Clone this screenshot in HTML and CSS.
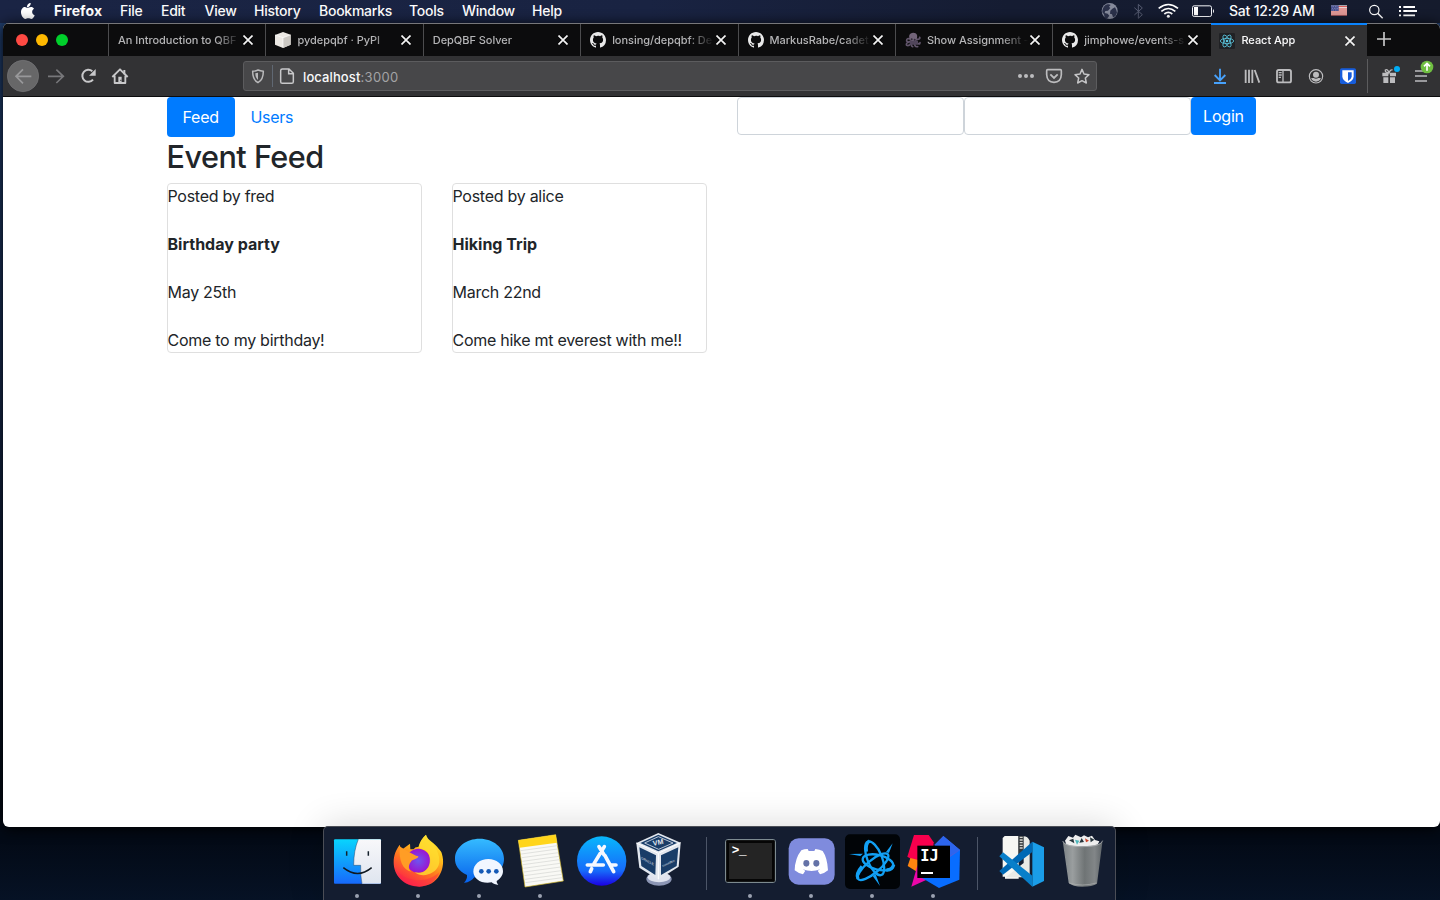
FILE: index.html
```html
<!DOCTYPE html>
<html lang="en">
<head>
<meta charset="utf-8">
<title>React App</title>
<link rel="stylesheet" href="styles.css">
</head>
<body>
<svg class="defs" width="0" height="0" aria-hidden="true">
  <defs>
    <symbol id="close" viewBox="0 0 30 30"><path d="M1 1 28 28M28 1 1 28" transform="translate(.5 .5)" stroke="#f4f4f4" stroke-width="5" fill="none"/></symbol>
    <symbol id="github" viewBox="0 0 16 16"><path fill="#e9e9e9" d="M8 0C3.58 0 0 3.58 0 8c0 3.54 2.29 6.53 5.47 7.59.4.07.55-.17.55-.38 0-.19-.01-.82-.01-1.49-2.01.37-2.53-.49-2.69-.94-.09-.23-.48-.94-.82-1.13-.28-.15-.68-.52-.01-.53.63-.01 1.08.58 1.23.82.72 1.21 1.87.87 2.33.66.07-.52.28-.87.51-1.07-1.78-.2-3.64-.89-3.64-3.95 0-.87.31-1.59.82-2.15-.08-.2-.36-1.02.08-2.12 0 0 .67-.21 2.2.82A7.6 7.6 0 0 1 8 3.87c.68 0 1.36.09 2 .26 1.53-1.04 2.2-.82 2.2-.82.44 1.1.16 1.92.08 2.12.51.56.82 1.27.82 2.15 0 3.07-1.87 3.75-3.65 3.95.29.25.54.73.54 1.48 0 1.07-.01 1.93-.01 2.2 0 .21.15.46.55.38A8.01 8.01 0 0 0 16 8c0-4.42-3.58-8-8-8z"/></symbol>
  </defs>
</svg>

<header class="menubar">
  <svg class="apple" viewBox="0 0 162 69"><path fill="#fff" d="M92 9c1 6-5 13-11 13-1-7 5-13 11-13zM82 24c3 0 6-3 11-3 4 0 7 2 9 5-8 5-7 16 2 20-2 6-6 11-10 11-3 0-5-2-9-2s-6 2-9 2c-6 0-13-11-13-20 0-10 6-16 12-16 3 0 5 3 7 3z"/></svg>
  <nav class="menus">
    <span class="app-name">Firefox</span><span>File</span><span>Edit</span><span>View</span><span>History</span><span>Bookmarks</span><span>Tools</span><span>Window</span><span>Help</span>
  </nav>
  <div class="status">
    <svg width="28" height="23" viewBox="768 0 84 69"><circle cx="809" cy="33" r="24" fill="#858a9b"/><path fill="#2b314a" d="M794 17c8-6 15-5 18-2l-5 5 4 4-7 8-8 1-2 6 9 2 5 6-6 8-2 4-6-6-2-10-5-6c0-8 2-14 7-20zM817 26l8-4 4 8 2 8-5 11-7 3-3-9-6-2 1-9z"/></svg>
    <svg width="28" height="23" viewBox="852 0 84 69"><path fill="none" stroke="#555b70" stroke-width="3" d="M883 23 907 44 895 55V13l12 11-24 21"/></svg>
    <svg width="32" height="23" viewBox="936 0 96 69"><g fill="none" stroke="#fff" stroke-width="5"><path d="M956 25q29-23 58 0M964 34q21-17 42 0M973 42q12-10 24 0"/></g><circle cx="985" cy="49" r="4.500" fill="#fff"/></svg>
    <svg width="36" height="23" viewBox="12 0 108 69"><rect x="37.500" y="17.500" width="57" height="32" rx="5" fill="none" stroke="#f5f6fa" stroke-width="3"/><path fill="#fff" d="M42 21h12v25H42zM99 27q6 6 0 13z"/></svg>
    <span class="clock">Sat 12:29 AM</span>
    <svg width="32" height="23" viewBox="429 0 96 69"><path fill="#eee" d="M453 16h48v30h-48z"/><path stroke="#d3423f" stroke-width="3" d="M453 20h48M453 27h48M453 33h48M453 39h48M453 45h48"/><path fill="#454d8d" d="M453 16h23v17h-23z"/><path stroke="#bfc4e0" stroke-width="2" stroke-dasharray="2 3" d="M455 20h20M457 25h18M455 30h20"/></svg>
    <svg class="search" width="32" height="23" viewBox="540 0 96 69"><circle cx="583" cy="30" r="14" fill="none" stroke="#fff" stroke-width="3.500"/><path stroke="#fff" stroke-width="4.500" d="m593 40 15 15"/></svg>
    <svg width="32" height="23" viewBox="636 0 96 69"><path stroke="#fff" stroke-width="5.500" d="M657 21h6M657 33h6M657 46h6M670 21h35M670 33h41M670 46h35" /></svg>
  </div>
</header>

<main class="window">
  <div class="tabs">
    <div class="lights"><i class="red"></i><i class="yellow"></i><i class="green"></i></div>
    <div class="tab"><span class="title">An Introduction to QBF</span><svg class="x"><use href="#close"/></svg></div>
    <div class="tab"><svg class="fav" viewBox="0 0 48 48"><path fill="#ece9e4" d="M24 0 47 8v30L24 48 0 38V9z"/><path fill="#cbc8c3" d="m24 17 23-9v30L24 48z"/><path fill="none" stroke="#fff" stroke-width="2" d="m1 9 23 8 22-8M24 17v29"/></svg><span class="title">pydepqbf · PyPI</span><svg class="x"><use href="#close"/></svg></div>
    <div class="tab"><span class="title">DepQBF Solver</span><svg class="x"><use href="#close"/></svg></div>
    <div class="tab"><svg class="fav"><use href="#github"/></svg><span class="title">lonsing/depqbf: De</span><svg class="x"><use href="#close"/></svg></div>
    <div class="tab"><svg class="fav"><use href="#github"/></svg><span class="title">MarkusRabe/cadet</span><svg class="x"><use href="#close"/></svg></div>
    <div class="tab"><svg class="fav" viewBox="0 0 48 48"><g fill="none" stroke="#61556b" stroke-width="5" stroke-linecap="round"><path d="M18 22Q4 16 5 27q4 6 10 1M17 28Q1 32 5 40q7 4 14-8M23 29q-8 12 0 15M29 29q-2 17 9 15M32 27q12 15 13 5M31 23q16 0 13-7"/></g><path fill="#726479" d="M13 10C15 0 33-1 36 9c2 9-2 17-8 22-9 2-18-13-15-21z"/><path fill="#51465b" d="M15 26h24v12H15z"/><circle cx="20" cy="22" r="3" fill="#302a38"/><circle cx="29" cy="23" r="3" fill="#302a38"/></svg><span class="title">Show Assignment -</span><svg class="x"><use href="#close"/></svg></div>
    <div class="tab"><svg class="fav"><use href="#github"/></svg><span class="title">jimphowe/events-s</span><svg class="x"><use href="#close"/></svg></div>
    <div class="tab active"><svg class="fav" viewBox="0 0 48 48"><rect width="48" height="48" rx="4" fill="#202124"/><g fill="none" stroke="#5bc6df" stroke-width="2.500"><ellipse cx="24" cy="24" rx="20" ry="8"/><ellipse cx="24" cy="24" rx="20" ry="8" transform="rotate(60 24 24)"/><ellipse cx="24" cy="24" rx="20" ry="8" transform="rotate(120 24 24)"/></g><circle cx="24" cy="24" r="4" fill="#5bc6df"/></svg><span class="title">React App</span><svg class="x"><use href="#close"/></svg></div>
    <svg class="newtab" viewBox="0 0 48 48"><path stroke="#c8c8c9" stroke-width="5" d="M3 24h42M24 3v42"/></svg>
  </div>

  <div class="toolbar">
    <svg class="tool back" viewBox="21 168 96 120"><circle cx="69" cy="228" r="47" fill="#676768" stroke="#77777a" stroke-width="2"/><path d="M94 229H48M69 208l-21 21 21 21" fill="none" stroke="#98989a" stroke-width="5"/></svg>
    <svg class="tool" viewBox="120 168 96 120"><path d="M144 229h46M169 209l21 20-21 20" fill="none" stroke="#77777a" stroke-width="5"/></svg>
    <svg class="tool" viewBox="216 168 96 120"><path d="M279 239a18 18 0 1 1-2-25" fill="none" stroke="#c8c8ca" stroke-width="6"/><path fill="#c8c8ca" d="M287 207v20h-20z"/></svg>
    <svg class="tool" viewBox="312 168 96 120"><path d="m337 231 23-23 23 23M344 227v22h32v-22" fill="none" stroke="#c8c8ca" stroke-width="5.500" stroke-linejoin="round"/><path fill="#c8c8ca" d="M355 230h10v20h-10zM370 210h6v13h-6z"/><path fill="#323234" d="M361 239h3v4h-3z"/></svg>
    <div class="urlbar">
      <svg class="uicon" viewBox="732 186 84 84"><path d="M774 210q7 3 16 4c0 17-4 28-16 34-12-6-16-17-16-34q9-1 16-4z" fill="none" stroke="#b9b9bb" stroke-width="4.500"/><path d="M774 218v22c-6-5-8-11-8-20z" fill="#b9b9bb"/></svg>
      <span class="divider"></span>
      <svg class="uicon" viewBox="819 186 84 84"><path d="M847 207h20l13 13v25q0 5-5 5h-28q-5 0-5-5v-33q0-5 5-5zM866 208v13h13" fill="none" stroke="#c8c8ca" stroke-width="4.500"/></svg>
      <span class="address"><b>localhost</b>:3000</span>
      <svg class="uicon" viewBox="516 186 84 84"><g fill="#bcbcbe"><circle cx="540" cy="228" r="6"/><circle cx="558" cy="228" r="6"/><circle cx="576" cy="228" r="6"/></g></svg>
      <svg class="uicon" viewBox="600 186 84 84"><path d="M623 209h38q3 0 3 3v12q-1 22-22 23-21-1-22-23v-12q0-3 3-3z" fill="none" stroke="#bcbcbe" stroke-width="5"/><path d="m631 223 11 11 11-11" fill="none" stroke="#bcbcbe" stroke-width="5.500"/></svg>
      <svg class="uicon" viewBox="684 186 84 84"><path d="m726 208 6 14 15 2-11 10 3 15-13-7-13 7 3-15-11-10 15-2z" fill="none" stroke="#c4c4c6" stroke-width="4.500" stroke-linejoin="round"/></svg>
    </div>
    <svg class="tool first-right" viewBox="72 168 96 120"><path d="M120 206v33M104 225l16 16 16-16M102 249h36" fill="none" stroke="#47a1fb" stroke-width="5.500"/></svg>
    <svg class="tool" viewBox="168 168 96 120"><path d="M197 209v40M207 209v40M217 209v40M224 210l14 38" fill="none" stroke="#bcbcbe" stroke-width="5.500"/></svg>
    <svg class="tool" viewBox="264 168 96 120"><rect x="291" y="210" width="42" height="37" rx="5" fill="none" stroke="#bcbcbe" stroke-width="5.500"/><path d="M309 210v37M296 218h9M296 225h9M296 232h7" stroke="#bcbcbe" stroke-width="4"/></svg>
    <svg class="tool" viewBox="360 168 96 120"><circle cx="408" cy="229" r="20" fill="none" stroke="#bcbcbe" stroke-width="3.500"/><circle cx="408" cy="224" r="9" fill="#bcbcbe"/><path d="M393 235q5-2 8-1 7 5 14 0 4-1 8 1-5 10-15 10t-15-10z" fill="#bcbcbe"/></svg>
    <svg class="tool" viewBox="456 168 96 120"><rect x="480" y="205" width="48" height="47" rx="5" fill="#175ddc"/><path fill="#fff" d="M487 211h34v18q0 12-17 20-17-8-17-20z"/><path fill="#175ddc" d="M504 217h11v13q-1 7-11 13z"/></svg>
    <span class="tool-sep"></span>
    <svg class="tool gift" viewBox="576 168 96 120"><g fill="#bcbcbe"><path d="M607 218h18v11h-18zM630 218h18v11h-18zM610 232h15v17h-15zM630 232h15v17h-15z"/></g><path d="M627 219q-13-1-11-9 7-4 11 9 4-12 11-9" stroke="#bcbcbe" stroke-width="4" fill="none"/><circle cx="651" cy="207" r="9" fill="#00adf5"/></svg>
    <svg class="tool" viewBox="675 168 96 120"><path d="M705 213h24M705 228h36M705 243h36" stroke="#bcbcbe" stroke-width="5"/><circle cx="741" cy="201" r="19" fill="#70bf41"/><path d="M741 212v-21M732 199l9-9 9 9" fill="none" stroke="#fff" stroke-width="5"/></svg>
  </div>

  <section class="page">
    <div class="container">
      <div class="row">
        <nav class="pills col"><a class="pill selected">Feed</a><a class="pill">Users</a></nav>
        <form class="login col"><input class="field" type="text" aria-label="Username"><input class="field" type="password" aria-label="Password"><button class="btn" type="button">Login</button></form>
      </div>
      <h2 class="heading">Event Feed</h2>
      <div class="cards">
        <article class="card"><p>Posted by fred</p><p class="name">Birthday party</p><p>May 25th</p><p>Come to my birthday!</p></article>
        <article class="card"><p>Posted by alice</p><p class="name">Hiking Trip</p><p>March 22nd</p><p>Come hike mt everest with me!!</p></article>
      </div>
    </div>
  </section>
</main>

<footer class="dock">
  <div class="app running"><svg viewBox="19.5 21 183 219"><defs><linearGradient id="fb" x1="0" y1="0" x2="0" y2="1"><stop offset="0" stop-color="#08d4fd"/><stop offset="1" stop-color="#1769fb"/></linearGradient><linearGradient id="fw" x1="0" y1="0" x2="0" y2="1"><stop offset="0" stop-color="#f8f8fa"/><stop offset="1" stop-color="#dfe5ef"/></linearGradient></defs><rect x="42" y="58" width="141" height="133" rx="3" fill="url(#fb)"/><path d="M115 58h65q3 0 3 3v127q0 3-3 3h-54q-5-22-4-55h-21q0-45 14-78z" fill="url(#fw)"/><path d="M115 58q-14 33-14 78h21q-1 33 4 55" fill="none" stroke="#25496f" stroke-width="1.500"/><path d="M80 94v13M145 94v13" stroke="#14212c" stroke-width="4.500"/><path d="M70 143q43 35 85 0" fill="none" stroke="#10181f" stroke-width="4.500"/></svg></div>
  <div class="app running"><svg viewBox="202.5 21 183 219"><defs><linearGradient id="ff" x1=".8" y1="0" x2=".25" y2="1"><stop offset="0" stop-color="#fff23a"/><stop offset=".3" stop-color="#ffc11b"/><stop offset=".6" stop-color="#ff7420"/><stop offset="1" stop-color="#fb174e"/></linearGradient><radialGradient id="fp"><stop offset="0" stop-color="#6d55ef"/><stop offset="1" stop-color="#9b14cf"/></radialGradient></defs><path d="M318 44c5 18 27 24 38 42 6 6 9 10 10 17 12 38-8 96-68 97-47-2-77-32-77-73 0-23 7-36 18-53l5 16 26-19 1 17 10 0q4-8 14-7 7-24 23-37z" fill="url(#ff)"/><circle cx="295" cy="122" r="36" fill="url(#fp)"/><path d="M318 44c-11 11-23 28-20 41 25 4 34 19 31 43-4 24-24 34-45 29 25 19 63 4 72-21 7-22-4-47-16-62-12-10-21-15-22-30z" fill="#ffdc31" opacity=".8"/><path d="M240 80c15 8 38 24 55 29 1 8-21 10-22 16-9 10-8 23 1 30-25-6-39-33-34-75z" fill="#ff9d25"/><path d="M225 143c24 43 92 52 133 14-10 27-33 43-61 43-41 0-65-25-72-57z" fill="#fb234b" opacity=".4"/></svg></div>
  <div class="app running"><svg viewBox="385.5 21 183 219"><defs><linearGradient id="mb" x1="0" y1="0" x2="0" y2="1"><stop offset="0" stop-color="#35bbff"/><stop offset="1" stop-color="#0761ec"/></linearGradient></defs><path d="M479 56c41 0 73 27 73 60 0 44-46 66-89 56-8 10-19 17-31 16 7-7 10-14 9-23-25-12-37-29-36-51 1-33 34-58 74-58z" fill="url(#mb)"/><path d="M505 117c24 0 44 16 44 36 0 12-7 23-19 30 0 5 2 8 5 12-8-1-16-4-20-8-31 6-54-11-55-32 0-22 20-38 45-38z" fill="#f1f6ff"/><g fill="#1459b6"><circle cx="484" cy="154" r="7"/><circle cx="506" cy="154" r="7"/><circle cx="529" cy="154" r="7"/></g></svg></div>
  <div class="app running"><svg viewBox="-1.5 21 183 219"><path d="m25 61 112-17 23 139-115 18z" fill="#f9f9f5" stroke="#cfb426" stroke-width="2"/><path d="m25 61 112-17 4 24-112 15z" fill="#ffd51b"/><path stroke="#d3d4d2" stroke-width="2" d="m32 92 110-15M34 102l109-15M36 113l109-15M37 124l110-15M39 134l110-15M40 145l110-15M42 156l110-15M43 167l111-15M45 178l110-15M46 188l111-15"/></svg></div>
  <div class="app"><svg viewBox="181.5 21 183 219"><defs><linearGradient id="as" x1="0" y1="0" x2="0" y2="1"><stop offset="0" stop-color="#08b7fc"/><stop offset=".7" stop-color="#176afa"/><stop offset="1" stop-color="#1b00e2"/></linearGradient></defs><circle cx="275" cy="123" r="74" fill="url(#as)"/><path d="m283 80-31 51M267 80l15 24M245 146l-4 9M232 135h48M304 135h14M285 107l26 48" fill="none" stroke="#f5f8ff" stroke-width="11" stroke-linecap="round"/></svg></div>
  <div class="app"><svg viewBox="364.5 21 183 219"><ellipse cx="447" cy="177" rx="38" ry="20" fill="#8c96b4"/><ellipse cx="447" cy="172" rx="34" ry="15" fill="#dfe3ee"/><path d="m379 69 66-30 67 29-6 72-61 39-57-36z" fill="#e2e7ee"/><path d="m391 69 54-25 56 25-56 25z" fill="#193d68"/><path d="m404 69 41-19 44 19-43 19z" fill="none" stroke="#d7deeb" stroke-width="2.500"/><path d="m388 82 50 24-2 59-42-27zM453 106l52-24-5 56-47 27z" fill="#193d68"/><path d="m379 69 66 31 67-32M445 100v78" fill="none" stroke="#fff" stroke-width="3"/><text class="vm-text" transform="translate(430 77) rotate(-10)" font-size="21">VM</text><text class="vm-text thin" transform="matrix(.9 .48 0 1 394 117)" font-size="10">ORACLE</text><text class="vm-text thin" transform="matrix(.9 -.45 0 1 457 142)" font-size="9">VirtualBox</text></svg></div>
  <span class="dock-sep"></span>
  <div class="app running"><svg viewBox="58.500 21 183 219"><rect x="77" y="59" width="149" height="128" rx="6" fill="#242424" stroke="#91a1a4" stroke-width="3"/><rect x="83" y="65" width="137" height="116" fill="#242424" stroke="#050505" stroke-width="8"/><text x="95" y="101" class="prompt">&gt;_</text></svg></div>
  <div class="app running"><svg viewBox="241.500 21 183 219"><rect x="266" y="55" width="138" height="139" rx="30" fill="#7f8bdd"/><path d="M304 91q9-4 19-4l3 6h17l3-6q13 1 22 6 14 20 16 58-10 9-24 12l-7-11 8-4q-26 10-53 0l8 4-7 11q-14-3-25-12 1-36 20-60z" fill="#fff"/><ellipse cx="319" cy="130" rx="9" ry="10" fill="#6472a7"/><ellipse cx="349" cy="130" rx="9" ry="10" fill="#6472a7"/></svg></div>
  <div class="app running"><svg viewBox="424.500 21 183 219"><rect x="435" y="43" width="165" height="164" rx="15" fill="#010407"/><g fill="none" stroke="#12a0f4" stroke-width="7"><ellipse cx="524" cy="115" rx="54" ry="22" transform="rotate(68 524 115)"/><ellipse cx="519" cy="140" rx="58" ry="19" transform="rotate(-40 519 140)"/><ellipse cx="534" cy="127" rx="47" ry="22" transform="rotate(14 534 127)"/></g><path d="m447 102 42-1-8 7zM578 70l-11 29-9-3zM540 198l-22-30 9-5z" fill="#12a0f4"/><path d="M474 176q-8-14 12-37M581 134q-4 17-22 16M499 95q-3-26 10-32" fill="none" stroke="#12a0f4" stroke-width="10"/></svg></div>
  <div class="app running"><svg viewBox="37.500 21 183 219"><path d="m72 45 44 0 15 22-8 86-71-43z" fill="#f8004d"/><path d="m61 114 33 8-13 33-28-17z" fill="#ff8510"/><path d="m82 137 46 34-64 29z" fill="#eb06a9"/><path d="m160 48 50 42-2 89-61 25-56-33z" fill="#086dff"/><path d="m133 75 27-27 50 42-34 23z" fill="#645bd2"/><path d="m160 48 50 42-30 18-47-33z" fill="#086dff" opacity=".6"/><rect x="82" y="77" width="98" height="97" fill="#000"/><text x="91" y="122" class="ij">IJ</text><path stroke="#fff" stroke-width="6" d="M93 159h36"/></svg></div>
  <span class="dock-sep"></span>
  <div class="app"><svg viewBox="301.500 21 183 219"><path d="m338 54 6-6h42v128h-41v-6h-7z" fill="#f7f7f3"/><path d="M385 48h16v62h-16z" fill="#373b3d"/><path d="M389 52h9M389 60h9M389 68h9M389 76h9M389 84h9" stroke="#d4d4d1" stroke-width="4"/><path d="M401 49q12 0 18 13v110h-72l54-43z" fill="#e9eae6"/><path d="m427 65 35 17v101l-35 17z" fill="#1a9de8"/><path d="m328 153 11 11 88-68V65z" fill="#0069b5"/><path d="m328 109 11-12 88 70v33z" fill="#087fca"/></svg></div>
  <div class="app"><svg viewBox="484.500 21 183 219"><defs><linearGradient id="tr"><stop offset="0" stop-color="#7c8285"/><stop offset=".25" stop-color="#9a9e9f"/><stop offset=".55" stop-color="#6f7475"/><stop offset=".8" stop-color="#828688"/><stop offset="1" stop-color="#5e6468"/></linearGradient></defs><path d="m525 62 10-14 14 5 7-9 17 8 9-6 12 6 12-5 9 13 13 4-10 20h-85z" fill="#eee"/><path d="m537 61 13-5 3 14zM568 68l7-14 7 12zM600 52l13 7-11 8z" fill="#27353c"/><path d="m555 59 13 3-7 12z" fill="#4eb8bc"/><path d="m585 55 12 7-9 5z" fill="#c94228"/><path d="M518 62q6 17 61 16 54 0 59-18l-17 131q-14 9-44 9-29 0-41-11z" fill="url(#tr)"/><path d="M518 63q6 18 61 17 54 0 59-18" fill="none" stroke="#b9bdbf" stroke-width="2"/><path d="M537 189q39 12 82 0" fill="none" stroke="#aeb0b1" stroke-width="2"/></svg></div>
</footer>
</body>
</html>
```
FILE: styles.css
```css
* { box-sizing: border-box; }
body {
  margin: 0;
  width: 1440px;
  height: 900px;
  overflow: hidden;
  display: flex;
  flex-direction: column;
  background: linear-gradient(#203e6e 0, #203d6b 100px, #182a4d 400px, #030b17 780px, #030a16 840px, #061225 900px);
  font-family: Inter, "Liberation Sans", sans-serif;
}
svg { display: block; flex: none; }
.defs { position: absolute; }

.menubar {
  display: flex;
  height: 23px;
  flex: none;
  background: linear-gradient(90deg, #1a2444, #192342 45%, #151c32 70%, #151b2d);
  color: #fff;
  font-size: 14px;
  font-weight: 500;
  line-height: 22px;
}
.apple { width: 54px; height: 23px; }
.menus {
  display: grid;
  grid-template-columns: 66px 41px 43.5px 49.5px 65px 90px 53px 70px 60px;
  width: 1042px;
  letter-spacing: -.25px;
  white-space: nowrap;
}
.app-name { font-weight: 700; letter-spacing: .1px; }
.status { display: flex; }
.clock { width: 94px; margin-left: 9px; letter-spacing: -.2px; white-space: nowrap; }
.search { margin-left: 5px; }

.window {
  display: flex;
  flex-direction: column;
  flex: none;
  width: 1437px;
  height: 804px;
  margin-left: 3px;
  border-radius: 6px;
  overflow: hidden;
  background: #fff;
  box-shadow: 0 2px 14px #000;
}
.tabs {
  display: flex;
  height: 33px;
  flex: none;
  border-top: 1px solid #77777a;
  background: #0c0c0d;
}
.lights { display: flex; gap: 8px; width: 105px; padding: 10px 0 0 13px; }
.lights i { width: 12px; height: 12px; border-radius: 50%; }
.red { background: #ff4a43; }
.yellow { background: #ffb900; }
.green { background: #00d02b; }
.tab {
  display: flex;
  align-items: center;
  width: 157.38px;
  padding: 0 12px 0 9px;
  border-left: 1px solid #4c4c4e;
  color: #b5b5b7;
  font-size: 11px;
  font-weight: 500;
}
.fav { width: 16px; height: 16px; margin-right: 6px; }
.title {
  flex: 1;
  min-width: 0;
  overflow: hidden;
  white-space: nowrap;
  letter-spacing: -.04px;
  line-height: 16px;
  mask-image: linear-gradient(90deg, #000 calc(100% - 26px), transparent);
}
.x { width: 10px; height: 10px; margin-left: 2px; }
.active {
  margin: -1px 0 0 1.3px;
  padding-left: 8.5px;
  border-top: 2px solid #0a84ff;
  border-left: 0;
  background: #323234;
  color: #f9f9fa;
  width: 156px;
}
.active .title { margin-top: -1px; }
.newtab { width: 16px; height: 16px; margin: 7px 0 0 9px; }

.toolbar {
  display: flex;
  flex: none;
  height: 41px;
  padding-left: 4px;
  background: #323234;
  border-bottom: 1px solid #0c0c0d;
}
.tool { width: 32px; height: 40px; }
.back { margin-right: 1px; }
.urlbar {
  display: flex;
  width: 854px;
  height: 30px;
  margin: 5px 0 0 107px;
  border: 1px solid #5c5c5e;
  border-radius: 3px;
  background: #474749;
}
.uicon { width: 28px; height: 28px; }
.divider { width: 1px; height: 22px; margin-top: 3px; background: #606873; }
.address {
  flex: 1;
  padding-left: 2px;
  color: #a3a3a5;
  font-size: 13px;
  line-height: 30px;
  letter-spacing: .35px;
}
.address b { color: #f9f9fa; font-weight: 500; letter-spacing: .1px; }
.first-right { margin-left: 107px; }
.tool-sep { width: 1px; height: 34px; margin: 3px 4px 0 3px; background: #5c5c5e; }
.gift { margin-right: 1px; }

.page { flex: 1; color: #212529; font-size: 16px; line-height: 24px; }
.container { width: 1140px; margin: 0 auto; padding: 0 15px; }
.row { display: flex; margin: 0 -15px; height: 40px; }
.col { width: 570px; padding: 0 15px; margin: 0; display: flex; align-items: flex-start; }
.pill { padding: 8px 15.5px; border-radius: 4px; color: #007bff; letter-spacing: -.3px; }
.selected { width: 68.5px; padding: 8px 16px; background: #007bff; color: #fff; letter-spacing: -.2px; }
.field { width: 227px; height: 38px; padding: 6px 12px; border: 1px solid #ced4da; border-radius: 4px; background: #fff; }
.btn {
  width: 65px;
  height: 38px;
  padding: 0 0 0 1px;
  border: 0;
  border-radius: 4px;
  background: #007bff;
  color: #fff;
  font: 16px/24px Inter, sans-serif;
  letter-spacing: -.2px;
}
.heading { margin: 0 0 7px; padding-top: 1px; font-size: 30.6px; font-weight: 500; line-height: 38.4px; letter-spacing: -.5px; }
.cards { display: flex; gap: 30px; }
.card { width: 255px; border: 1px solid #dfdfdf; border-radius: 4px; letter-spacing: -.27px; white-space: nowrap; }
.card p { margin: 0 0 24px; }
.card p:last-child { margin: 0; }
.card .name { font-weight: 700; letter-spacing: 0; }

.dock {
  display: flex;
  position: absolute;
  left: 323px;
  bottom: 0;
  width: 793px;
  height: 74px;
  padding: 0 2.5px;
  border: 1px solid #4b4e56;
  border-bottom: 0;
  border-radius: 5px 5px 0 0;
  background: #141d30;
  box-shadow: 0 0 36px rgba(0, 0, 0, .16);
}
.app { position: relative; width: 61px; }
.app svg { width: 61px; height: 73px; transform: translateX(-.5px); }
.running::after {
  content: "";
  position: absolute;
  left: 28.5px;
  top: 67px;
  width: 4px;
  height: 4px;
  border-radius: 50%;
  background: #9aa1b0;
}
.dock-sep { width: 1px; height: 53px; margin: 10px 13px 0; background: #4c5567; }
.prompt { font: 700 38px "Liberation Mono", monospace; fill: #fff; letter-spacing: -1px; }
.ij { font: 700 46px "DejaVu Sans Mono", monospace; fill: #fff; }
.vm-text { font-family: "Liberation Sans", sans-serif; font-weight: 700; fill: #e4e9f2; }
.thin { font-weight: 400; }
```
